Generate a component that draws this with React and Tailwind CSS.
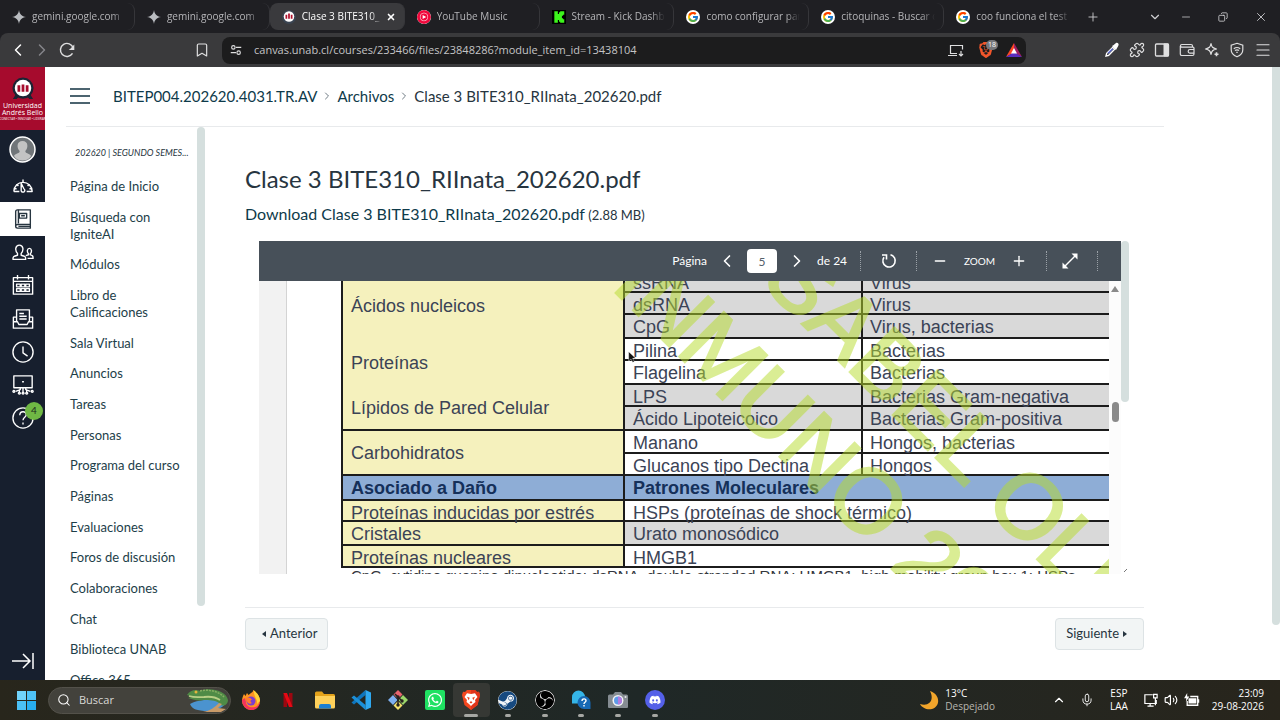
import { FcGoogle } from "react-icons/fc";
import { FaBrave, FaDiscord, FaWhatsapp, FaSteam } from "react-icons/fa6";
import { SiObsstudio, SiYoutubemusic } from "react-icons/si";
import {
  Bookmark,
  ChevronDown,
  ChevronLeft,
  ChevronRight,
  ChevronUp,
  Copy,
  Menu,
  Mic,
  Minus,
  Plus,
  Puzzle,
  Search,
  Volume2,
  X,
} from "lucide-react";

const GeminiIcon = () => (
  <svg viewBox="0 0 24 24" className="size-3.5 fill-[#b9bcc0]">
    <path d="M12 0c1 7 4.500 11 12 12-7.500 1-11 5-12 12-1-7-4.500-11-12-12C7.500 11 11 7 12 0z" />
  </svg>
);

const UnabIcon = () => (
  <svg viewBox="0 0 24 24" className="size-3.5">
    <circle cx="12" cy="12" r="12" fill="#3a4452" />
    <circle cx="12" cy="11" r="9" fill="#fff" />
    <path d="M6 8h3v7H6zM10.500 6h3v9h-3zM15 8h3v7h-3z" fill="#b0122f" />
  </svg>
);

const KickIcon = () => (
  <svg viewBox="0 0 24 24" className="size-3.5">
    <rect width="24" height="24" fill="#000" />
    <path d="M4 2h6v5h2V4h2V2h7v6h-2v2h-2v4h2v2h2v6h-7v-2h-2v-3h-2v5H4z" fill="#3df51c" />
  </svg>
);

const GoogleTabIcon = () => (
  <span className="flex size-3.5 items-center justify-center rounded-full bg-white">
    <FcGoogle className="size-3" />
  </span>
);

const YtIcon = () => <SiYoutubemusic className="size-3.5 rounded-full bg-white text-[#f0083c]" />;

const tabs = [
  { title: "gemini.google.com", Icon: GeminiIcon },
  { title: "gemini.google.com", Icon: GeminiIcon },
  { title: "Clase 3 BITE310_", Icon: UnabIcon, active: true },
  { title: "YouTube Music", Icon: YtIcon },
  { title: "Stream - Kick Dashb", Icon: KickIcon },
  { title: "como configurar pan", Icon: GoogleTabIcon },
  { title: "citoquinas - Buscar c", Icon: GoogleTabIcon },
  { title: "coo funciona el test", Icon: GoogleTabIcon },
];

function Tab({ title, Icon, active }) {
  return (
    <div
      className={`flex h-[27px] min-w-0 flex-1 items-center rounded-lg pl-3 text-[10px] ${
        active ? "bg-[#3a3a3d] pr-2 text-white" : "pr-2 text-[#b5b5b8]"
      }`}
    >
      <span className="shrink-0">
        <Icon />
      </span>
      <span className="ml-1.5 min-w-0 flex-1 mask-r-from-85% whitespace-nowrap">{title}</span>
      {active && (
        <button aria-label="Cerrar" className="ml-1">
          <X className="size-2.5" strokeWidth={4} />
        </button>
      )}
    </div>
  );
}

function TabStrip() {
  return (
    <div className="flex h-[33px] items-center bg-[#1f1f23]">
      <div className="flex w-[1078px] shrink items-center divide-x divide-[#36363a]">
        {tabs.map((tab, i) => (
          <Tab key={i} {...tab} />
        ))}
      </div>
      <div className="flex flex-1 items-center pr-3 pl-2 text-[#d0d0d3]">
        <button aria-label="Nueva pestaña">
          <Plus className="size-3.5" strokeWidth={1.5} />
        </button>
        <button aria-label="Buscar pestañas" className="mr-[18px] ml-auto">
          <ChevronDown className="size-3.5" />
        </button>
        <div className="flex items-center gap-[26px]">
          <button aria-label="Minimizar">
            <Minus className="size-3" strokeWidth={1.5} />
          </button>
          <button aria-label="Restaurar" className="-scale-x-100">
            <Copy className="size-2.5" />
          </button>
          <button aria-label="Cerrar ventana">
            <X className="size-3.5" strokeWidth={1.5} />
          </button>
        </div>
      </div>
    </div>
  );
}

const toolIcons = [
  {
    label: "Cuentagotas",
    icon: (
      <svg viewBox="0 0 24 24" className="size-4" fill="none">
        <path d="M3 21l1-4 9-9 3 3-9 9z" stroke="#fff" strokeWidth="2" />
        <path d="M6 17l7-7" stroke="#6070d8" strokeWidth="2" />
        <path d="M12 6l2-1 4-3.500c3-1 5 2 3.500 4L19 10l-1 2z" fill="#fff" />
      </svg>
    ),
  },
  { label: "Extensiones", icon: <Puzzle className="size-4" strokeWidth={1.8} /> },
  {
    label: "Panel lateral",
    icon: (
      <svg viewBox="0 0 16 16" className="size-4" fill="none" stroke="currentColor">
        <rect x="1.500" y="2" width="13" height="12" rx="1" strokeWidth="1.300" />
        <path d="M10 2h4.500v12H10z" fill="currentColor" />
      </svg>
    ),
  },
  {
    label: "Cartera",
    icon: (
      <svg viewBox="0 0 16 16" className="size-4" fill="none" stroke="currentColor" strokeWidth="1.200">
        <path d="M13.500 5V4a1.500 1.500 0 0 0-1.500-1.500H2.800a1.300 1.300 0 0 0 0 2.700H14a1 1 0 0 1 1 1V12a1.500 1.500 0 0 1-1.500 1.500h-11A1.500 1.500 0 0 1 1.300 12V4" />
        <path d="M15 7.500h-4a1.800 1.800 0 0 0 0 3.600h4" />
      </svg>
    ),
  },
  {
    label: "Leo",
    icon: (
      <svg viewBox="0 0 16 16" className="size-4" fill="none" stroke="currentColor" strokeWidth="1.200" strokeLinejoin="round">
        <path d="M7 1.500c.7 3.600 1.600 4.600 5.500 5.500-3.900.9-4.800 1.900-5.500 5.500C6.300 8.900 5.400 7.900 1.500 7 5.400 6.100 6.300 5.100 7 1.500z" />
        <path d="M12.500 10.300v4M10.500 12.300h4" strokeWidth="1.600" />
      </svg>
    ),
  },
  {
    label: "VPN",
    icon: (
      <svg viewBox="0 0 16 16" className="size-4" fill="none" stroke="currentColor" strokeWidth="1.200">
        <path d="M8 1.300l5.800 2v4.500c0 3.400-2.400 5.700-5.800 7-3.400-1.300-5.800-3.600-5.800-7V3.300z" />
        <path d="M4.800 6.700c2-1.500 4.400-1.500 6.400 0M6 8.600c1.300-1 2.700-1 4 0M7.300 10.400h1.400" />
      </svg>
    ),
  },
];

function Toolbar() {
  return (
    <div className="flex h-[34px] items-center rounded-t-lg bg-[#3a3a3c] pr-2 pl-2 text-[#dededf]">
      <button aria-label="Atrás">
        <ChevronLeft className="size-5 text-white" strokeWidth={1.8} />
      </button>
      <button aria-label="Adelante" className="ml-1">
        <ChevronRight className="size-5 text-[#85858a]" strokeWidth={1.8} />
      </button>
      <button aria-label="Recargar" className="ml-1.5">
        <svg viewBox="0 0 16 16" className="size-4.5" fill="none" stroke="currentColor" strokeWidth="1.300">
          <path d="M12.900 11A5.800 5.800 0 1 1 13.500 6.200" />
          <path d="M14.500 3v5H9.500l2-1.500 1-1.500z" fill="currentColor" stroke="none" />
        </svg>
      </button>
      <button aria-label="Marcador" className="ml-[118px]">
        <Bookmark className="size-4" strokeWidth={1.8} />
      </button>
      <div className="ml-3 flex h-[27px] w-[804px] min-w-0 shrink items-center rounded-lg bg-[#1c1c1d] pr-1 pl-2">
        <svg viewBox="0 0 16 16" className="size-3 shrink-0" fill="none" stroke="currentColor" strokeWidth="1.500">
          <circle cx="4.500" cy="4.500" r="2.300" />
          <path d="M8 4.500h7M1 11.500h7" />
          <circle cx="11.500" cy="11.500" r="2.300" />
        </svg>
        <input
          aria-label="Dirección"
          className="ml-3 min-w-0 flex-1 text-[11px] text-[#c4c4c6] outline-none"
          defaultValue="canvas.unab.cl/courses/233466/files/23848286?module_item_id=13438104"
        />
        <svg viewBox="0 0 16 16" className="size-4" fill="none" stroke="currentColor" strokeWidth="1.200">
          <path d="M9 11.500H2.500v-8h12v4M0 13.500h9M13 9v5M11 12l2 2 2-2" />
        </svg>
        <span className="relative ml-3.5 flex">
          <FaBrave className="size-4 text-[#f1562b]" />
          <span className="absolute -top-0.5 -right-1 rounded-full bg-[#77777a] px-0.5 text-[7px] leading-2.5 text-white">
            18
          </span>
        </span>
        <svg viewBox="0 0 16 16" className="ml-3 size-4">
          <path d="M8 1L0 15l8-4.500z" fill="#ff4724" />
          <path d="M8 1l8 14-8-4.500z" fill="#9e1f63" />
          <path d="M0 15h16l-8-5z" fill="#5a2dbd" />
          <path d="M8 6l3 5.500H5z" fill="#fff" />
        </svg>
      </div>
      <div className="ml-auto flex items-center gap-[9px]">
        {toolIcons.map(({ label, icon }) => (
          <button key={label} aria-label={label}>
            {icon}
          </button>
        ))}
        <button aria-label="Menú">
          <Menu className="size-4.5" strokeWidth={1.6} />
        </button>
      </div>
    </div>
  );
}

const globalNav = [
  {
    label: "Tablero",
    paths: ["M2 18a10 10 0 1 1 20 0h-6M2 18h6", "M10 9l3 6a2 2 0 1 1-3 2z", "M12 5v3M5 10l2 2M19 10l-2 2M3 15h2M21 15h-2"],
  },
  {
    label: "Cursos",
    active: true,
    paths: ["M4 20V4a2 2 0 0 1 2-2h14v16H6a2 2 0 0 0 0 4h14v-4", "M8 6h8v5H8zM10 8.500h4M7 20h13M7 2v15"],
  },
  {
    label: "Grupos",
    paths: [
      "M1 20h14c0-3-1-3.500-5-4.500v-2c3-3 2.500-9-2-9s-5 6-2 9v2c-4 1-5 1.500-5 4.500z",
      "M17 19h6c0-3-.5-3-3-4v-1c2-2 1.500-6-1-6s-3 4-1 6v1l-3 1",
    ],
  },
  {
    label: "Calendario",
    paths: ["M1.500 4h21v18h-21zM1.500 8h21M6 1v5M18 1v5", "M5 11h4v3H5zM10 11h4v3h-4zM15 11h4v3h-4zM5 16h4v3H5zM10 16h4v3h-4zM15 16h4v3h-4z"],
  },
  {
    label: "Bandeja",
    paths: ["M5 15V2h14v13M8 6h5M8 9h8M8 12h8", "M5 10H1.500v12h21V10H19M1.500 15H6l1.500 3h9l1.500-3h4.500"],
  },
  { label: "Historial", paths: ["M12 1a11 11 0 1 0 0 22 11 11 0 0 0 0-22z", "M12 6v7l5 3.500"] },
  {
    label: "Studio",
    paths: [
      "M2 2h20v13H2zM11 8.500h2",
      "M12 15v5M9 15v2l-5 2M15 15v2l5 2M8 17v3M16 17v3",
      "M2 18a1 1 0 1 0 .1 0zM22 18a1 1 0 1 0 .1 0zM8 20a1 1 0 1 0 .1 0zM16 20a1 1 0 1 0 .1 0zM12 20a1 1 0 1 0 .1 0z",
    ],
  },
  {
    label: "Ayuda",
    badge: 4,
    paths: ["M12 1a11 11 0 1 0 0 22 11 11 0 0 0 0-22z", "M8.500 9c0-5 7-5 7-.5 0 3-3.500 2.500-3.500 6M12 17v2"],
  },
];

function GlobalNav() {
  return (
    <nav className="flex w-[45px] shrink-0 flex-col bg-[#171f2e]">
      <a href="#" className="flex h-[63px] flex-col items-center bg-[#a60b2d] pt-2.5 text-white">
        <svg viewBox="0 0 24 26" className="h-6 w-[22px]">
          <path d="M4 19l-3 5h4l2-2h10l2 2h4l-3-5z" fill="#1b2434" />
          <circle cx="12" cy="12" r="11.500" fill="#1b2434" />
          <circle cx="12" cy="12" r="9" fill="#fff" />
          <path d="M6 9h3v7H6zM10.500 8h3v8h-3zM15 9h3v7h-3z" fill="#a60b2d" />
        </svg>
        <span className="mt-px text-center font-['Open_Sans'] text-[7px] leading-[7px] whitespace-nowrap">
          Universidad
          <br />
          Andrés Bello
        </span>
        <span className="mt-px font-['Open_Sans'] text-[3px] leading-[4px] whitespace-nowrap">
          CONECTAR • INNOVAR • LIDERAR
        </span>
      </a>
      <a href="#" aria-label="Cuenta" className="flex h-[39px] items-center justify-center">
        <svg viewBox="0 0 27 27" className="size-[27px]">
          <circle cx="13.500" cy="13.500" r="12.500" fill="#707579" stroke="#fff" strokeWidth="1.500" />
          <path d="M13.500 5c6 0 6 7 2.800 10 0 3 4.700 2 5.700 5-3 6-14 6-17 0 1-3 5.700-2 5.700-5C7.500 12 7.500 5 13.500 5z" fill="#c3c3c3" />
        </svg>
      </a>
      <div className="flex h-[266px] flex-col">
        {globalNav.map(({ label, paths, active, badge }) => (
          <a
            key={label}
            href="#"
            aria-label={label}
            className={`relative flex flex-1 items-center justify-center ${
              active ? "bg-white text-[#273540]" : "text-white"
            }`}
          >
            <svg
              viewBox="0 0 24 24"
              className="size-[22px]"
              fill="none"
              stroke="currentColor"
              strokeWidth="1.500"
              strokeLinejoin="round"
            >
              {paths.map((d) => (
                <path key={d} d={d} />
              ))}
            </svg>
            {badge && (
              <span className="absolute top-0 right-0.5 flex size-[18px] items-center justify-center rounded-full bg-[#6fb844] text-[10px] text-[#1d2b20]">
                {badge}
              </span>
            )}
          </a>
        ))}
      </div>
      <button aria-label="Expandir" className="mt-auto flex h-[38px] items-center justify-center text-white">
        <svg viewBox="0 0 22 16" className="h-4 w-[22px]" fill="none" stroke="currentColor" strokeWidth="1.500">
          <path d="M0 8h18M11 1l7 7-7 7M21 0v16" />
        </svg>
      </button>
    </nav>
  );
}

const courseLinks = [
  "Página de Inicio",
  "Búsqueda con IgniteAI",
  "Módulos",
  "Libro de Calificaciones",
  "Sala Virtual",
  "Anuncios",
  "Tareas",
  "Personas",
  "Programa del curso",
  "Páginas",
  "Evaluaciones",
  "Foros de discusión",
  "Colaboraciones",
  "Chat",
  "Biblioteca UNAB",
  "Office 365",
];

function CourseNav() {
  return (
    <div className="flex w-[139px] shrink-0 justify-between">
      <nav className="pl-1">
        <p className="mt-5 pl-[5px] text-[9px] leading-3 whitespace-nowrap text-[#273540] italic">
          202620 | SEGUNDO SEMES...
        </p>
        <ul className="mt-[19px] flex h-[511px] flex-col justify-between">
          {courseLinks.map((link) => (
            <li key={link} className="w-[116px] text-[13px] leading-[17px] text-[#1d3e49]">
              <a href="#">{link}</a>
            </li>
          ))}
        </ul>
      </nav>
      <div className="h-[479px] w-2 shrink-0 rounded-full bg-[#d5dfde]" />
    </div>
  );
}

const rows = [
  { h: "h-[22px]", left: "Ácidos nucleicos", span: 3, name: "ssRNA", found: "Virus", gray: true },
  { h: "h-[22px]", name: "dsRNA", found: "Virus", gray: true },
  { h: "h-[24px]", name: "CpG", found: "Virus, bacterias", gray: true },
  { h: "h-[22px]", left: "Proteínas", span: 2, name: "Pilina", found: "Bacterias" },
  { h: "h-[24px]", name: "Flagelina", found: "Bacterias" },
  { h: "h-[22px]", left: "Lípidos de Pared Celular", span: 2, line: true, name: "LPS", found: "Bacterias Gram-negativa", gray: true },
  { h: "h-[24px]", name: "Ácido Lipoteicoico", found: "Bacterias Gram-positiva", gray: true },
  { h: "h-[23px]", left: "Carbohidratos", span: 2, line: true, name: "Manano", found: "Hongos, bacterias" },
  { h: "h-[22px]", name: "Glucanos tipo Dectina", found: "Hongos" },
  { h: "h-[25px]", left: "Asociado a Daño", line: true, name: "Patrones Moleculares", head: true },
  { h: "h-[21px]", left: "Proteínas inducidas por estrés", line: true, name: "HSPs (proteínas de shock térmico)" },
  { h: "h-[24px]", left: "Cristales", line: true, name: "Urato monosódico", gray: true },
  { h: "h-[22px]", left: "Proteínas nucleares", line: true, name: "HMGB1" },
];

function SlideTable() {
  return (
    <table className="-mt-[10px] ml-[54px] w-[1000px] table-fixed border-separate border-spacing-0 text-left text-[18px] leading-[14px] text-[#3b4356]">
      <colgroup>
        <col className="w-[282px]" />
        <col className="w-[238px]" />
        <col />
      </colgroup>
      <tbody>
        {rows.map((row) => {
          const fill = row.head ? "bg-[#8eadd6] font-bold text-[#15305a]" : row.gray ? "bg-[#d9d9d9]" : "bg-white";
          return (
            <tr key={row.name} className={row.h}>
              {row.left && (
                <td
                  rowSpan={row.span || 1}
                  className={`border-l-2 border-[#1c1c1c] pl-2 whitespace-nowrap ${
                    row.line ? "border-b-2" : ""
                  } ${row.span ? "pt-px align-middle" : "pt-[5px] align-top"} ${
                    row.head ? "bg-[#8eadd6] font-bold text-[#15305a]" : "bg-[#f5f1bd]"
                  }`}
                >
                  {row.left}
                </td>
              )}
              <td
                colSpan={row.found ? 1 : 2}
                className={`border-b-2 border-l-2 border-[#1c1c1c] pt-[5px] pl-2 align-top whitespace-nowrap ${fill}`}
              >
                {row.name}
              </td>
              {row.found && (
                <td className={`border-b-2 border-l-2 border-[#1c1c1c] pt-[5px] pl-[7px] align-top whitespace-nowrap ${fill}`}>
                  {row.found}
                </td>
              )}
            </tr>
          );
        })}
      </tbody>
    </table>
  );
}

function PdfViewer() {
  return (
    <div className="mt-[14px] mr-[15px] ml-3.5 flex h-[333px]">
      <div className="flex min-w-0 flex-1 flex-col">
        <div className="flex h-10 shrink-0 items-center justify-end bg-[#475059] pr-[23px] text-[12px] text-white">
          <label htmlFor="page">Página</label>
          <button aria-label="Página anterior" className="ml-2.5">
            <ChevronLeft className="size-5" />
          </button>
          <input
            id="page"
            defaultValue="5"
            className="ml-2.5 h-6 w-[30px] rounded-sm bg-white text-center text-[#55606a]"
          />
          <button aria-label="Página siguiente" className="ml-2.5">
            <ChevronRight className="size-5" />
          </button>
          <span className="ml-2.5 w-[43px]">de 24</span>
          <button aria-label="Rotar" className="flex h-5 w-[56px] items-center justify-center border-l border-dotted border-[#9aa1a7]">
            <svg viewBox="0 0 16 16" className="size-4" fill="none" stroke="currentColor" strokeWidth="1.600">
              <path d="M9.500 1.800A6.200 6.200 0 1 1 3 4.200" />
              <path d="M1 2h4.500v4.500" />
            </svg>
          </button>
          <div className="flex h-5 w-[130px] items-center justify-center gap-4 border-l border-dotted border-[#9aa1a7] pr-1 text-[10px]">
            <button aria-label="Alejar">
              <Minus className="size-4" />
            </button>
            <span>ZOOM</span>
            <button aria-label="Acercar">
              <Plus className="size-4" />
            </button>
          </div>
          <button
            aria-label="Pantalla completa"
            className="flex h-5 w-[52px] items-center justify-center border-x border-dotted border-[#9aa1a7] pr-1"
          >
            <svg viewBox="0 0 16 16" className="size-4" fill="currentColor">
              <path d="M9.500.5H15.500V6.500L13 4 4 13l2.500 2.500H.5V9.500L3 12l9-9z" />
            </svg>
          </button>
        </div>
        <div className="flex min-h-0 flex-1">
          <div className="relative min-w-0 flex-1 overflow-hidden bg-[#f2f2f2] pl-[27px] font-['Liberation_Sans',sans-serif]">
            <div className="h-full overflow-hidden border-l border-[#d4d4d4] bg-white">
              <SlideTable />
              <p className="ml-16 text-[15px] leading-[15px] whitespace-nowrap text-[#33363c]">
                CpG, cytidine guanine dinucleotide; dsRNA, double-stranded RNA; HMGB1, high-mobility group box 1; HSPs
              </p>
            </div>
            <svg
              className="pointer-events-none absolute inset-0 size-full opacity-50"
              fill="#b7dc2c"
              stroke="#b7dc2c"
              strokeWidth="2.500"
              fontSize="91"
            >
              <text transform="translate(351 6) rotate(45)">INMUNO 2026</text>
              <text transform="translate(482 -18) rotate(45)">ISABEL OLIVA</text>
            </svg>
            <svg viewBox="0 0 12 18" className="absolute top-[70px] left-[369px] h-3 w-2">
              <path d="M1 1v14l3.500-3L7 17l2.500-1-2.500-5h4.500z" fill="#111" stroke="#fff" strokeWidth=".6" />
            </svg>
          </div>
          <div className="flex w-3 flex-col items-center bg-[#fcfcfc] pt-[5px]">
            <div className="border-x-4 border-b-6 border-x-transparent border-b-[#8a8a8a]" />
            <div className="mt-[110px] h-5 w-[7px] rounded-full bg-[#8a8a8a]" />
          </div>
        </div>
      </div>
      <div className="flex w-2 flex-col justify-between">
        <div className="h-[161px] rounded-full bg-[#d5dfde]" />
        <svg viewBox="0 0 8 8" className="size-2" fill="none" stroke="#777">
          <path d="M3 6l3-3" />
        </svg>
      </div>
    </div>
  );
}

function Page() {
  return (
    <main className="flex min-w-0 flex-1 flex-col overflow-hidden pr-[108px] pl-[21px] text-[#273540]">
      <header className="flex h-[60px] shrink-0 items-center border-b border-[#e8eaec] pb-px pl-1 text-[15px] text-[#0e3a4a]">
        <button aria-label="Menú del curso" className="flex w-5 flex-col gap-[5px]">
          <span className="h-0.5 bg-[#4c6470]" />
          <span className="h-0.5 bg-[#4c6470]" />
          <span className="h-0.5 bg-[#4c6470]" />
        </button>
        <a href="#" className="ml-[23px]">
          BITEP004.202620.4031.TR.AV
        </a>
        <ChevronRight className="mx-1 size-3 text-[#6f7b84]" />
        <a href="#">Archivos</a>
        <ChevronRight className="mx-1 size-3 text-[#6f7b84]" />
        <span className="text-[#273540]">Clase 3 BITE310_RIInata_202620.pdf</span>
      </header>
      <div className="flex min-h-0 flex-1">
        <CourseNav />
        <section className="ml-10 min-w-0 flex-1 pr-5">
          <h1 className="mt-9 text-[24px] leading-8">Clase 3 BITE310_RIInata_202620.pdf</h1>
          <p className="mt-[7px] text-[13px] leading-6">
            <a href="#" className="text-[16px] text-[#0e3a4a]">
              Download Clase 3 BITE310_RIInata_202620.pdf
            </a>{" "}
            (2.88 MB)
          </p>
          <PdfViewer />
          <div className="mt-[33px] flex justify-between border-t border-[#e8eaec] pt-2.5 text-[13px]">
            <button className="flex h-8 items-center gap-1 rounded-sm border border-[#dde3e5] bg-[#f2f5f5] pr-2.5 pl-4">
              <span className="border-y-3 border-r-4 border-y-transparent border-r-[#273540]" />
              Anterior
            </button>
            <button className="flex h-8 items-center gap-1 rounded-sm border border-[#dde3e5] bg-[#f2f5f5] pr-4 pl-2.5">
              Siguiente
              <span className="border-y-3 border-l-4 border-y-transparent border-l-[#273540]" />
            </button>
          </div>
        </section>
      </div>
    </main>
  );
}

const apps = [
  {
    name: "Firefox",
    icon: (
      <svg viewBox="0 0 20 20" className="size-5">
        <path d="M10 3c2-1 2-2 2.500-3C16 3 19 6 19 11a9 9 0 0 1-18 0c0-3 1-5 2-7l1.500 2L6 3l1.500 2z" fill="#ff9421" />
        <path d="M1 10c0 5 4 10 9.500 10 5 0 8.500-4 8.500-9-1 4-3 5.500-5 6-5 1-9-1-9-5l-1-4z" fill="#f5325b" />
        <path d="M12.500 0C16 3 19 6 19 11l-3 3c1-5-3-6-3.500-14z" fill="#ffd43a" />
        <circle cx="10" cy="11" r="4.500" fill="#7a3fd0" />
        <path d="M5 8c3-1 5 0 6 2-2-.5-2 2 0 3-3 2-6-1-6-5z" fill="#ff7b2c" />
      </svg>
    ),
  },
  {
    name: "Netflix",
    icon: (
      <svg viewBox="0 0 20 20" className="size-5">
        <path d="M5.500 3H9v14H5.500zM11 3h3.500v14H11z" fill="#9c0710" />
        <path d="M5.500 3H9l5.500 14H11z" fill="#e50914" />
      </svg>
    ),
  },
  {
    name: "Explorador",
    icon: (
      <svg viewBox="0 0 20 20" className="size-5">
        <path d="M0 3a1.500 1.500 0 0 1 1.500-1.500H7L9 4h9.500A1.500 1.500 0 0 1 20 5.500V8H0z" fill="#e3a21b" />
        <path d="M0 6h20v11a1.500 1.500 0 0 1-1.500 1.500h-17A1.500 1.500 0 0 1 0 17z" fill="#fdd05a" />
        <path d="M4 18.500V16a2 2 0 0 1 2-2h8a2 2 0 0 1 2 2v2.500z" fill="#1b7fd2" />
      </svg>
    ),
  },
  {
    name: "Visual Studio Code",
    icon: (
      <svg viewBox="0 0 20 20" className="size-5">
        <path d="M14.500 0v5L3 14.500l-2.500-2z" fill="#0f75bd" />
        <path d="M14.500 20v-5L3 5.500.5 7.500z" fill="#1b8fd8" />
        <path d="M14.500 0L20 2.500v15L14.500 20z" fill="#2fa9f0" />
      </svg>
    ),
  },
  {
    name: "Git",
    icon: (
      <svg viewBox="0 0 20 20" className="size-5">
        <path d="M10 0l4.500 4.500L10 9 5.500 4.500z" fill="#e8646f" />
        <path d="M5 5l4.500 5L5 15 0 10z" fill="#7fb0f0" />
        <path d="M15 5l5 5-5 5-4.500-5z" fill="#9bd66b" />
        <path d="M10 11l4.500 4.500L10 20l-4.500-4.500z" fill="#f7e36d" />
        <path d="M7 4l3 3v8M10 7l4 4" stroke="#27211f" strokeWidth="1.500" fill="none" />
        <g fill="#27211f">
          <circle cx="10" cy="7" r="1.700" />
          <circle cx="14" cy="11" r="1.700" />
          <circle cx="10" cy="15" r="1.700" />
        </g>
      </svg>
    ),
  },
  {
    name: "WhatsApp",
    icon: (
      <span className="flex size-5 items-center justify-center rounded-xs bg-[#1fe162]">
        <FaWhatsapp className="size-4 text-white" />
      </span>
    ),
  },
  { name: "Brave", open: true, active: true, icon: <BraveLogo /> },
  {
    name: "Steam",
    open: true,
    icon: <FaSteam className="size-[19px] rounded-full bg-[#f2f5f8] text-[#174a80]" />,
  },
  {
    name: "OBS Studio",
    open: true,
    icon: <SiObsstudio className="size-5 rounded-full bg-black text-[#e6e6e6]" />,
  },
  {
    name: "Obtener ayuda",
    open: true,
    icon: (
      <svg viewBox="0 0 20 20" className="size-5">
        <path d="M1 13V7a6.500 6.500 0 1 1 6.500 6.500H1z" fill="#35b5e8" />
        <path d="M13 6a6.500 6.500 0 1 0 0 13h6.500v-6.500A6.500 6.500 0 0 0 13 6z" fill="#1769b5" />
        <path d="M11 11c0-3 4-2.500 4-.3 0 1.600-2 1.600-2 3.300M13 15v1.500" fill="none" stroke="#fff" strokeWidth="1.400" />
      </svg>
    ),
  },
  {
    name: "Cámara",
    open: true,
    icon: (
      <svg viewBox="0 0 20 20" className="size-5">
        <path d="M1.500 4.500H5l2-2.500h6l2 2.500h3.500A1.500 1.500 0 0 1 20 6v11a1 1 0 0 1-1 1H1a1 1 0 0 1-1-1V6a1.500 1.500 0 0 1 1.500-1.500z" fill="#858c92" />
        <circle cx="10" cy="10.500" r="5.500" fill="#f2f2f5" />
        <circle cx="10" cy="10.500" r="4" fill="#5e9be8" />
        <path d="M10 6.500a4 4 0 0 1 0 8z" fill="#b47ce0" />
        <circle cx="17.500" cy="7" r="1" fill="#e8e8e8" />
      </svg>
    ),
  },
  {
    name: "Discord",
    open: true,
    icon: (
      <span className="flex size-5 items-center justify-center rounded-full bg-[#5460e8]">
        <FaDiscord className="size-3 text-white" />
      </span>
    ),
  },
];

function BraveLogo() {
  return (
    <svg viewBox="0 0 18 20" className="h-5 w-[18px]">
      <path d="M5 0h8l2 2 2-.3L18 5l-.5 2-2 8L9 20l-6.500-5-2-8L0 5l1-3.300L3 2z" fill="#f4471f" />
      <path d="M9 0h4l2 2 2-.3L18 5l-.5 2-2 8L9 20z" fill="#e0351b" />
      <path d="M9 4l4-.7L15.500 7l-2.500 3 .5 2L11 14l-2 2-2-2-2.500-2 .5-2L2.500 7 5 3.300z" fill="#fff" />
      <path d="M5 6.800l2.700 1-1 2.500zM13 6.800l-2.700 1 1 2.500zM9 11l1.500 1.500L9 13.500l-1.500-1z" fill="#e8401d" />
    </svg>
  );
}

function Taskbar() {
  return (
    <footer className="flex h-10 shrink-0 items-center bg-linear-to-r from-[#28261c] via-[#1f2827] via-50% to-[#28251c] pr-4 pl-[17px] text-white">
      <button aria-label="Inicio" className="grid grid-cols-2 gap-px">
        <span className="size-[9px] bg-[#71d3fa]" />
        <span className="size-[9px] bg-[#4fc3f7]" />
        <span className="size-[9px] bg-[#4bc0f5]" />
        <span className="size-[9px] bg-[#28aef0]" />
      </button>
      <label className="ml-3 flex h-[27px] w-[183px] items-center overflow-hidden rounded-full border border-[#53514a] bg-[#43423c] pl-2">
        <Search className="size-3.5 shrink-0" strokeWidth={1.8} />
        <input placeholder="Buscar" className="ml-2 min-w-0 flex-1 text-[11px] outline-none placeholder:text-[#d8d8d5]" />
        <svg viewBox="0 0 44 24" className="h-6 w-11 shrink-0">
          <path d="M4 16c8-5 28-6 36-2-2 6-12 10-22 9S6 20 4 16z" fill="#4b93cf" />
          <path d="M1 7c3-5 9-6 13-4 9-4 26-1 28 9 0 5-6 8-9 3-4-3-10-3-15-3-6 1-10 0-16-2l5-1z" fill="#4f8b46" />
          <path d="M3 8c6 2 11 1 15 1 8-1 13 1 16 3" stroke="#b9cf86" strokeWidth="1.800" fill="none" />
          <path d="M14 3c8-2 18 0 24 6" stroke="#85ae62" strokeWidth="1.500" fill="none" strokeDasharray="2 1" />
          <path d="M17 24c7-1 12-5 16-9l3 1-4 4 8 1-5 3z" fill="#c99b68" />
          <circle cx="10" cy="4" r="1.500" fill="#e5b33c" />
        </svg>
      </label>
      <ul className="ml-0.5 grid h-full w-[440px] grid-cols-12">
        {apps.map(({ name, icon, open, active }) => (
          <li key={name}>
            <button
              aria-label={name}
              className={`relative mt-[3px] flex h-[34px] w-full items-center justify-center rounded-sm ${
                active ? "bg-[#363834]" : ""
              }`}
            >
              {icon}
              {open && (
                <span
                  className={`absolute bottom-0 h-[3px] rounded-full bg-[#a6a7a3] ${active ? "w-3.5" : "w-[6px]"}`}
                />
              )}
            </button>
          </li>
        ))}
      </ul>
      <div className="ml-auto flex items-center text-[10px] leading-[13px]">
        <svg viewBox="0 0 20 20" className="size-5">
          <path d="M11 1c10 3 11 15 2 18-5 1-10-1-12-5 8 3 15-3 10-13z" fill="#f2a52b" />
        </svg>
        <div className="ml-1.5">
          13°C
          <div className="text-[#b9b7b0]">Despejado</div>
        </div>
        <button aria-label="Iconos ocultos" className="ml-[57px]">
          <ChevronUp className="size-3.5" />
        </button>
        <Mic className="ml-3.5 size-3.5" strokeWidth={1.500} />
        <div className="ml-4 text-center">
          ESP
          <br />
          LAA
        </div>
        <div className="ml-4 flex items-center gap-1.5">
          <svg viewBox="0 0 16 16" className="size-3.5" fill="none" stroke="currentColor" strokeWidth="1.400">
            <path d="M10 2H1v10h13V8M4 15h7M7 12v3M11 1.500h4v4h-4zM13 5.500V14" />
          </svg>
          <Volume2 className="size-3.5" />
          <svg viewBox="0 0 18 16" className="h-3.5 w-4" fill="currentColor">
            <path d="M5 6h9v6H5z" />
            <path d="M7 4h8.500v10h-12V9M16.500 7v4" fill="none" stroke="currentColor" strokeWidth="1.500" />
            <path d="M3.500 0L0 6h2.500L2 10l4-6H3.500z" />
          </svg>
        </div>
        <div className="ml-3 text-right">
          23:09
          <br />
          29-08-2026
        </div>
      </div>
    </footer>
  );
}

export default function App() {
  return (
    <div className="flex h-screen flex-col overflow-hidden bg-[#1f1f23] font-['Open_Sans',sans-serif]">
      <TabStrip />
      <Toolbar />
      <div className="flex min-h-0 flex-1 bg-white font-[Lato,sans-serif]">
        <GlobalNav />
        <Page />
        <div className="h-[558px] w-2 shrink-0 rounded-b-full bg-[#d5dfde]" />
      </div>
      <Taskbar />
    </div>
  );
}
